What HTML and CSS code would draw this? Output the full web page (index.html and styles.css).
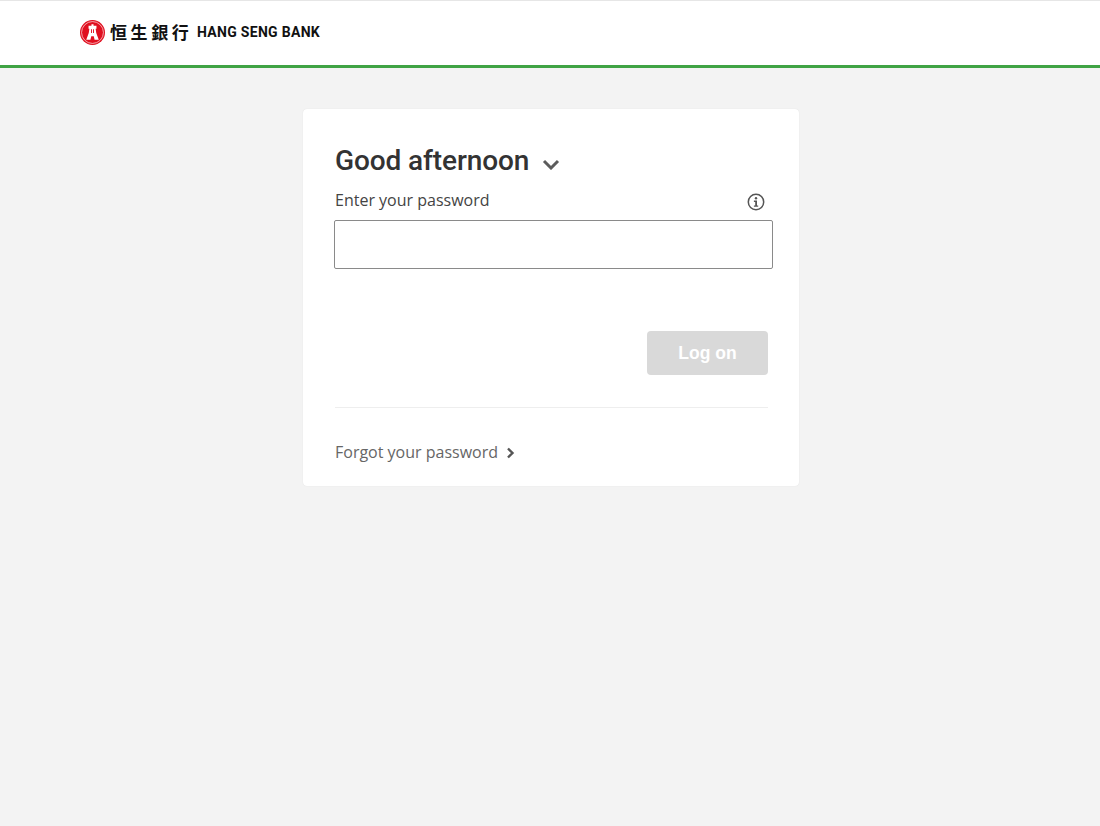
FILE: index.html
```html
<!DOCTYPE html>
<html lang="en">
<head>
<meta charset="utf-8">
<title>Hang Seng Bank</title>
<link rel="stylesheet" href="styles.css">
</head>
<body>
<header class="site-header">
  <div class="logo">
    <svg class="logo-mark" width="25" height="25" viewBox="0 0 24 24" aria-hidden="true">
      <circle cx="12" cy="12" r="12" fill="#e01020"/>
      <circle cx="12" cy="12" r="10.500" fill="none" stroke="#fff" stroke-width=".6"/>
      <path d="M11 4h2v1.500h2.800v3H15l.6 4 2.400 6.500h-4l-.8-3.500h-2.400L10 19H6l2.400-6.500.6-4h-.8v-3H11z" fill="#fff"/>
      <path d="M10.600 8.800h.9v3.600h-.9zM12.500 8.800h.9v3.600h-.9z" fill="#e01020"/>
    </svg>
    <span class="logo-cjk">恒生銀行</span>
    <span class="logo-en">HANG SENG BANK</span>
  </div>
</header>
<main class="page">
  <section class="card">
    <div class="greeting">
      <h1 class="greeting-title">Good afternoon</h1>
      <svg class="greeting-chevron" width="18" height="11" viewBox="0 0 18 11" aria-hidden="true">
        <path d="M2 2l7 7 7-7" fill="none" stroke="#5c5c5c" stroke-width="3"/>
      </svg>
    </div>
    <div class="field-head">
      <label class="field-label" for="pw">Enter your password</label>
      <svg class="info-icon" width="18" height="18" viewBox="0 0 18 18" aria-hidden="true">
        <circle cx="9" cy="9" r="7.700" fill="none" stroke="#555" stroke-width="1.500"/>
        <circle cx="9" cy="5.300" r="1.200" fill="#555"/>
        <path d="M6.900 7.600H10V12.400H11.200V13.700H6.900V12.400H8.200V8.900H6.900z" fill="#555"/>
      </svg>
    </div>
    <input class="field-input" id="pw" type="password">
    <div class="actions">
      <button class="btn-logon" type="button" disabled>Log on</button>
    </div>
    <hr class="divider">
    <a class="forgot" href="#">
      <span>Forgot your password</span>
      <svg width="8" height="12" viewBox="0 0 8 12" aria-hidden="true">
        <path d="M1 1.500L5.500 6 1 10.500" fill="none" stroke="#555" stroke-width="2.400"/>
      </svg>
    </a>
  </section>
</main>
</body>
</html>
```
FILE: styles.css
```css
* { box-sizing: border-box; }
html, body { margin: 0; height: 100%; }
body {
  background: #f3f3f3;
  font-family: "Open Sans", "Noto Sans", sans-serif;
  min-height: 826px;
}
.site-header {
  height: 68px;
  background: #fff;
  border-top: 1px solid #e6e6e6;
  border-bottom: 3px solid #3fa344;
  padding-left: 80px;
  display: flex;
  align-items: center;
}
.logo { display: flex; align-items: center; margin-bottom: 2px; }
.logo-mark { flex: none; }
.logo-cjk {
  font-family: "Noto Sans CJK TC", "Noto Sans CJK SC", serif;
  font-weight: 700;
  font-size: 17px;
  line-height: 24px;
  letter-spacing: 3.600px;
  color: #111;
  margin-left: 5px;
  width: 87px;
  white-space: nowrap;
}
.logo-en {
  font-family: "Roboto", "Liberation Sans", sans-serif;
  font-weight: 700;
  font-size: 14px;
  letter-spacing: .3px;
  line-height: 24px;
  color: #111;
  white-space: nowrap;
}
.page { display: flex; justify-content: center; padding-top: 41px; padding-left: 2px; }
.card {
  width: 496px;
  height: 377px;
  background: #fff;
  border-radius: 4px;
  box-shadow: 0 0 1px rgba(0, 0, 0, .12);
  padding: 32px 26px 0 32px;
}
.greeting { display: flex; align-items: center; height: 40px; }
.greeting-title {
  margin: 0;
  font-family: "Roboto", sans-serif;
  font-weight: 500;
  font-size: 28px;
  letter-spacing: -.1px;
  line-height: 40px;
  color: #333;
  white-space: nowrap;
}
.greeting-chevron { margin-left: 13px; margin-top: 7px; }
.field-head {
  display: flex;
  justify-content: space-between;
  align-items: center;
  height: 26px;
  padding-right: 8px;
  margin-top: 6px;
}
.field-label { font-size: 16px; line-height: 24px; color: #444; }
.info-icon { margin-top: 4px; }
.field-input {
  display: block;
  width: 439px;
  height: 49px;
  margin: 7px 0 0 -1px;
  border: 1px solid #8a8a8a;
  border-radius: 2px;
  background: #fff;
  outline: none;
}
.actions { display: flex; justify-content: flex-end; margin-top: 62px; width: 433px; }
.btn-logon {
  width: 121px;
  height: 44px;
  padding-top: 2px;
  border: 0;
  border-radius: 4px;
  background: #d9d9d9;
  color: #fff;
  font-family: "Liberation Sans", Arial, sans-serif;
  font-weight: 700;
  font-size: 17.500px;
}
.divider {
  width: 433px;
  height: 1px;
  margin: 32px 0 0;
  border: 0;
  background: #eeeeee;
}
.forgot {
  display: inline-flex;
  align-items: center;
  gap: 9px;
  margin-top: 32px;
  font-size: 16px;
  line-height: 24px;
  color: #666;
  text-decoration: none;
}
.forgot svg { margin-top: 2px; }
```
